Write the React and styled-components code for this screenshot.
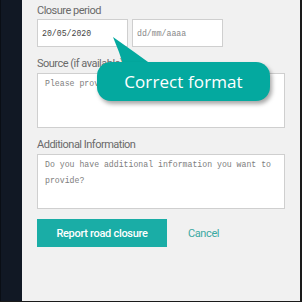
import React from "react";
import styled, { createGlobalStyle } from "styled-components";

const GlobalStyle = createGlobalStyle`
  html, body {
    margin: 0;
    padding: 0;
    background: #f1f1f1;
  }
`;

const Frame = styled.div`
  position: relative;
  display: flex;
  width: 302px;
  height: 302px;
  box-sizing: border-box;
  background: #f1f1f1;
  border-right: 2px solid #1a1a1a;
  border-bottom: 1px solid #1a1a1a;
  overflow: hidden;
`;

const Sidebar = styled.div`
  width: 22px;
  flex: none;
  background: #111824;
  border-left: 1px solid #0a0e15;
  box-sizing: border-box;
`;

const Main = styled.div`
  flex: 1;
  display: flex;
  flex-direction: column;
  gap: 10px;
  padding: 4px 0 0 15px;
  font-family: Roboto, "Liberation Sans", sans-serif;
`;

const Field = styled.div`
  display: flex;
  flex-direction: column;
`;

const Label = styled.label`
  font-size: 11px;
  line-height: 14px;
  letter-spacing: -0.5px;
  color: #6a6a6a;
  margin-bottom: ${(p) => p.$gap || 2}px;
`;

const DateRow = styled.div`
  display: flex;
  gap: 4px;
`;

const Input = styled.div`
  width: 91px;
  height: 28px;
  box-sizing: border-box;
  background: #fff;
  border: 1px solid #cfcfcf;
  padding: 0 4px;
  display: flex;
  align-items: center;
  font-family: "Liberation Mono", "DejaVu Sans Mono", monospace;
  font-size: 8.2px;
  color: ${(p) => (p.$placeholder ? "#888" : "#444")};
`;

const TextArea = styled.div`
  width: 248px;
  height: 55px;
  box-sizing: border-box;
  background: #fff;
  border: 1px solid #cfcfcf;
  padding: 2px 7px;
  font-family: "Liberation Mono", "DejaVu Sans Mono", monospace;
  font-size: 8.2px;
  line-height: 16px;
  color: #7e7e7e;
`;

const Actions = styled.div`
  display: flex;
  align-items: center;
  gap: 21px;
`;

const PrimaryButton = styled.button`
  width: 130px;
  height: 28px;
  border: none;
  background: #1aada6;
  color: #fff;
  font-family: inherit;
  font-size: 11px;
  font-weight: 500;
  letter-spacing: -0.3px;
  padding: 0;
  cursor: pointer;
`;

const LinkButton = styled.button`
  background: none;
  border: none;
  padding: 0;
  color: #3aa9a2;
  font-family: inherit;
  font-size: 11px;
  letter-spacing: -0.4px;
  cursor: pointer;
`;

const Tooltip = styled.div`
  position: absolute;
  left: 97px;
  top: 37px;
  width: 173px;
`;

const Tail = styled.svg`
  position: absolute;
  left: 0;
  top: 0;
  display: block;
`;

const Bubble = styled.div`
  position: relative;
  margin-top: 25px;
  height: 39px;
  border-radius: 14px;
  background: #04a99f;
  box-shadow: 2px 3px 4px rgba(0, 0, 0, 0.35);
  display: flex;
  align-items: center;
  justify-content: center;
  color: #fff;
  font-family: "Open Sans", "Noto Sans", sans-serif;
  font-size: 17px;
  letter-spacing: 0.1px;
`;

export default function App() {
  return (
    <>
      <GlobalStyle />
      <Frame>
        <Sidebar />
        <Main>
          <Field>
            <Label $gap={1}>Closure period</Label>
            <DateRow>
              <Input>20/05/2020</Input>
              <Input $placeholder>dd/mm/aaaa</Input>
            </DateRow>
          </Field>
          <Field>
            <Label>Source (if available)</Label>
            <TextArea>Please provide the source</TextArea>
          </Field>
          <Field>
            <Label>Additional Information</Label>
            <TextArea>
              Do you have additional information you want to provide?
            </TextArea>
          </Field>
          <Actions>
            <PrimaryButton>Report road closure</PrimaryButton>
            <LinkButton>Cancel</LinkButton>
          </Actions>
        </Main>
        <Tooltip>
          <Tail width="70" height="30" viewBox="0 0 70 30">
            <path d="M16 0 Q 22 14 27 30 L 58 30 Q 36 14 16 0 Z" fill="#04a99f" />
          </Tail>
          <Bubble>Correct format</Bubble>
        </Tooltip>
      </Frame>
    </>
  );
}
